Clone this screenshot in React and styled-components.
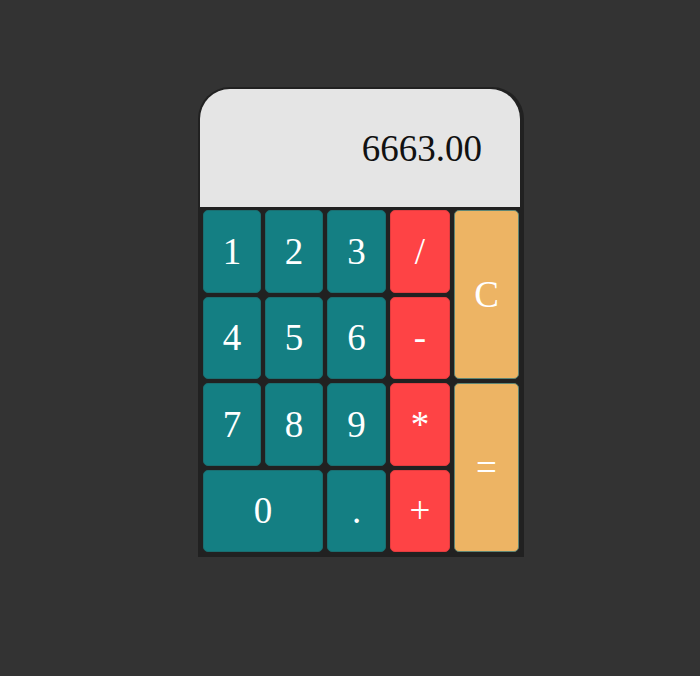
import React from "react";
import styled, { createGlobalStyle } from "styled-components";

const Global = createGlobalStyle`
  html, body { margin: 0; padding: 0; background: #333333; }
  body { font-family: "Liberation Serif", "Times New Roman", serif; }
`;

const Page = styled.div`
  min-height: 676px;
  padding: 87px 0 0 198px;
  box-sizing: border-box;
`;

const Calculator = styled.div`
  width: 326px;
  box-sizing: border-box;
  background: #212121;
  border-radius: 32px 32px 0 0;
  padding: 2px 4px 5px 2px;
  display: flex;
  flex-direction: column;
  gap: 3px;
`;

const Display = styled.div`
  height: 118px;
  background: #e5e5e5;
  border-radius: 30px 30px 0 0;
  display: flex;
  align-items: center;
  justify-content: flex-end;
  padding-right: 38px;
  font-size: 37px;
  color: #111;
`;

const Keys = styled.div`
  display: grid;
  grid-template-columns: 58px 58px 59px 60px 65px;
  grid-template-rows: repeat(4, 82.5px);
  gap: 4px;
  padding-left: 3px;
`;

const palette = {
  num: { bg: "#147f83", border: "#1a6e70" },
  op: { bg: "#fe4345", border: "#e23c3f" },
  ctl: { bg: "#edb464", border: "#5f8574" },
};

const Key = styled.button`
  grid-column: ${(p) => p.$col || "auto"};
  grid-row: ${(p) => p.$row || "auto"};
  background: ${(p) => palette[p.$kind].bg};
  border: 1px solid ${(p) => palette[p.$kind].border};
  border-radius: 5px;
  color: #ffffff;
  font-family: "Liberation Serif", "Times New Roman", serif;
  font-size: 37px;
  padding: 0;
  display: flex;
  align-items: center;
  justify-content: center;
  cursor: pointer;
`;

export default function App() {
  return (
    <>
      <Global />
      <Page>
        <Calculator>
          <Display>6663.00</Display>
          <Keys>
            <Key $kind="num">1</Key>
            <Key $kind="num">2</Key>
            <Key $kind="num">3</Key>
            <Key $kind="op">/</Key>
            <Key $kind="ctl" $col="5" $row="1 / span 2">C</Key>
            <Key $kind="num">4</Key>
            <Key $kind="num">5</Key>
            <Key $kind="num">6</Key>
            <Key $kind="op">-</Key>
            <Key $kind="num">7</Key>
            <Key $kind="num">8</Key>
            <Key $kind="num">9</Key>
            <Key $kind="op">*</Key>
            <Key $kind="ctl" $col="5" $row="3 / span 2">=</Key>
            <Key $kind="num" $col="1 / span 2">0</Key>
            <Key $kind="num">.</Key>
            <Key $kind="op">+</Key>
          </Keys>
        </Calculator>
      </Page>
    </>
  );
}
